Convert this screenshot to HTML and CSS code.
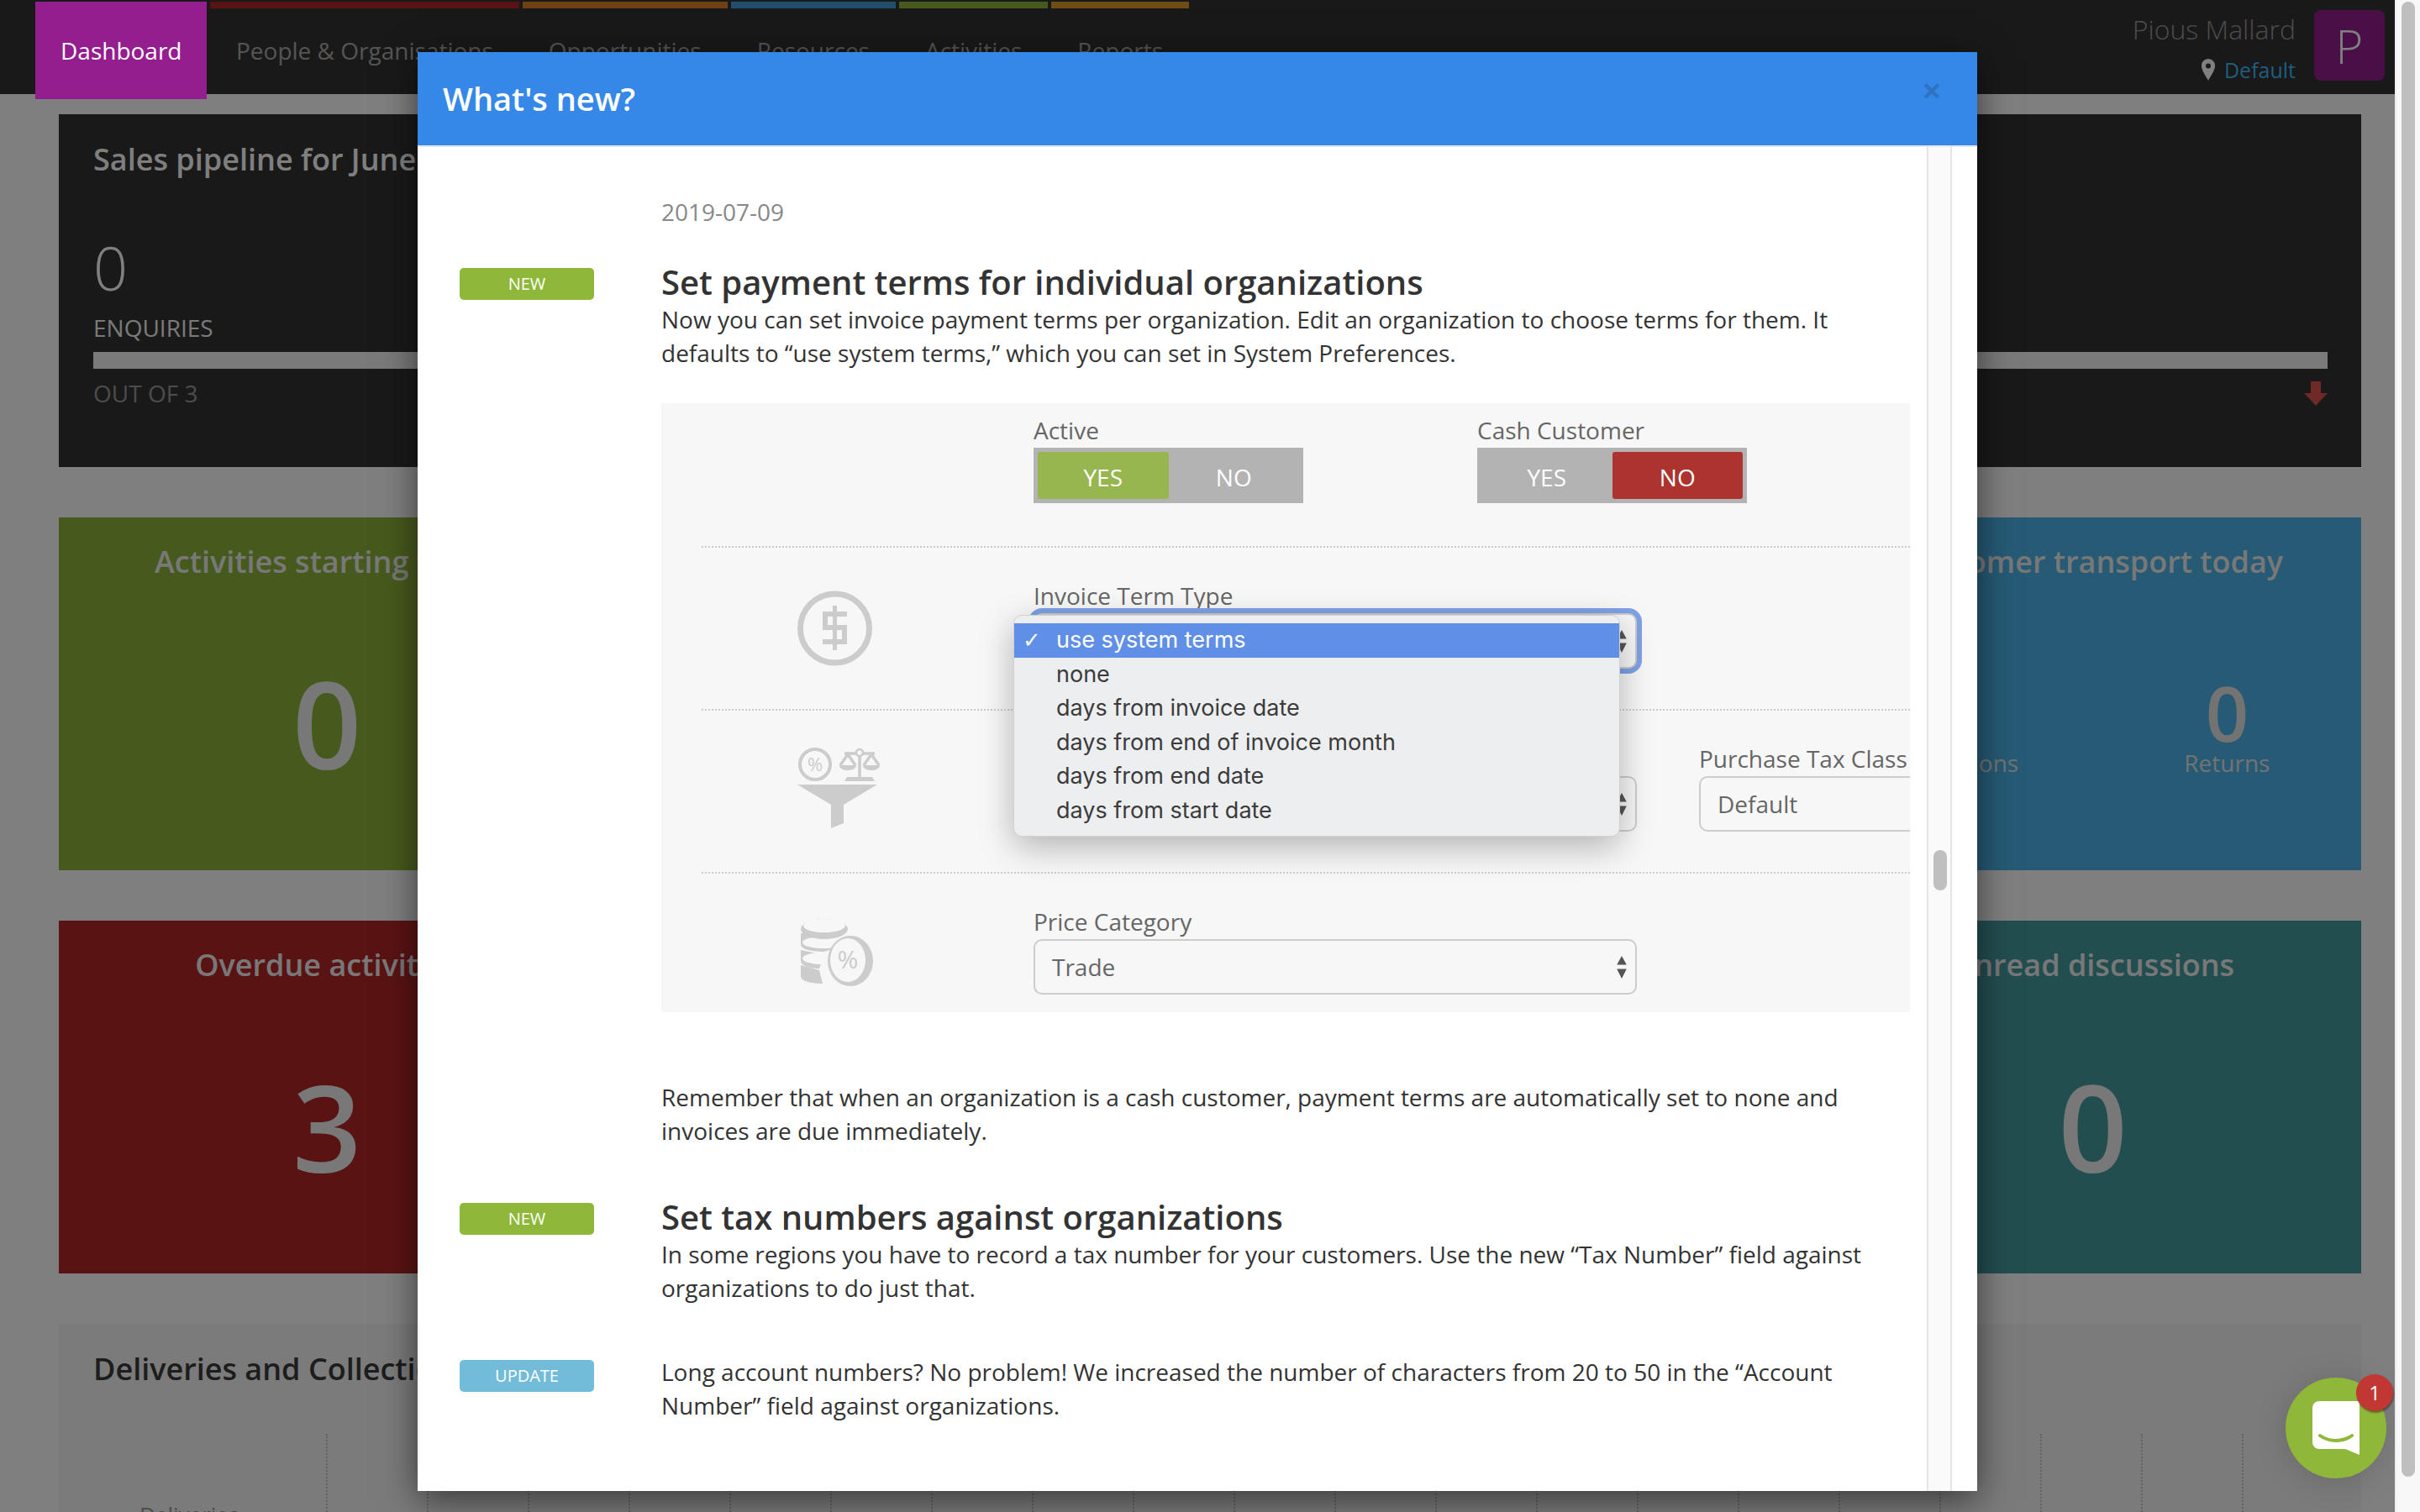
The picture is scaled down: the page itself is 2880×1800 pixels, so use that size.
FILE: index.html
```html
<!DOCTYPE html>
<html lang="en">
<head>
<meta charset="utf-8">
<title>Dashboard - What's new?</title>
<link rel="stylesheet" href="styles.css">
</head>
<body>
<div class="viewport">
  <header class="topbar">
    <nav class="nav">
      <a class="nav-item nav-active">Dashboard</a>
      <a class="nav-item bar-red">People &amp; Organisations</a>
      <a class="nav-item bar-orange">Opportunities</a>
      <a class="nav-item bar-blue">Resources</a>
      <a class="nav-item bar-green">Activities</a>
      <a class="nav-item bar-amber">Reports</a>
    </nav>
    <div class="user">
      <div class="user-text">
        <div class="user-name">Pious Mallard</div>
        <div class="user-store">
          <svg class="pin" viewBox="0 0 16 26"><path fill-rule="evenodd" d="M8 0a8 8 0 0 1 8 8.500C16 14 10.500 21 8 26 5.500 21 0 14 0 8.500A8 8 0 0 1 8 0zm0 5.500a3 3 0 1 0 0 6 3 3 0 0 0 0-6z"/></svg>
          <span class="store-link">Default</span>
        </div>
      </div>
      <div class="avatar">P</div>
    </div>
  </header>

  <main class="dash">
    <section class="card card-dark card-wide">
      <h2 class="sales-title">Sales pipeline for June 2019</h2>
      <div class="sales-num">0</div>
      <div class="sales-label">ENQUIRIES</div>
      <div class="sales-bar"></div>
      <div class="sales-foot">
        <span>OUT OF 3</span>
        <svg class="down" viewBox="0 0 28 29"><path d="M8 0h12v14h8L14 29 0 14h8z"/></svg>
      </div>
    </section>

    <section class="card card-green">
      <h2 class="card-title">Activities starting today</h2>
      <div class="big-num">0</div>
    </section>
    <section class="card card-amber"></section>
    <section class="card card-violet"></section>
    <section class="card card-blue">
      <h2 class="card-title">Customer transport today</h2>
      <div class="split">
        <div><div class="mid-num">0</div><div class="mid-label">Collections</div></div>
        <div><div class="mid-num">0</div><div class="mid-label">Returns</div></div>
      </div>
    </section>

    <section class="card card-red">
      <h2 class="card-title">Overdue activities</h2>
      <div class="big-num">3</div>
    </section>
    <section class="card card-amber"></section>
    <section class="card card-violet"></section>
    <section class="card card-teal">
      <h2 class="card-title">Unread discussions</h2>
      <div class="big-num">0</div>
    </section>

    <section class="panel">
      <h2 class="panel-title">Deliveries and Collections</h2>
      <div class="chart">
        <div class="chart-col chart-first"><span class="chart-label">Deliveries</span></div>
        <div class="chart-col"></div><div class="chart-col"></div><div class="chart-col"></div><div class="chart-col"></div>
        <div class="chart-col"></div><div class="chart-col"></div><div class="chart-col"></div><div class="chart-col"></div>
        <div class="chart-col"></div><div class="chart-col"></div><div class="chart-col"></div><div class="chart-col"></div>
        <div class="chart-col"></div><div class="chart-col"></div><div class="chart-col"></div><div class="chart-col"></div>
        <div class="chart-col"></div><div class="chart-col"></div><div class="chart-col"></div>
      </div>
    </section>
  </main>

  <div class="backdrop"></div>

  <div class="modal">
    <div class="modal-head">
      <h1 class="modal-title">What's new?</h1>
      <span class="modal-close">×</span>
    </div>
    <div class="modal-body">
      <div class="modal-scroll">
        <div class="entry entry-date">
          <div></div>
          <div class="date">2019-07-09</div>
        </div>

        <article class="entry">
          <div><span class="badge badge-new">NEW</span></div>
          <div>
            <h3 class="entry-title">Set payment terms for individual organizations</h3>
            <p class="entry-text">Now you can set invoice payment terms per organization. Edit an organization to choose terms for them. It defaults to “use system terms,” which you can set in System Preferences.</p>

            <div class="shot">
              <div class="shot-row shot-row-top">
                <div class="shot-icon"></div>
                <div class="fields">
                  <div class="field field-active">
                    <div class="field-label">Active</div>
                    <div class="toggle"><span class="toggle-opt opt-yes">YES</span><span class="toggle-opt">NO</span></div>
                  </div>
                  <div class="field">
                    <div class="field-label">Cash Customer</div>
                    <div class="toggle"><span class="toggle-opt">YES</span><span class="toggle-opt opt-no">NO</span></div>
                  </div>
                </div>
              </div>

              <div class="shot-row">
                <div class="shot-icon icon-dollar">
                  <svg class="glyph" viewBox="0 0 110 100">
                    <circle class="g-stroke" cx="50.500" cy="50" r="41" stroke-width="7"/>
                    <path class="g-stroke" stroke-width="6" d="M65 33H39v16h23v17H36"/>
                    <path class="g-stroke" stroke-width="5" d="M50.500 23v53"/>
                  </svg>
                </div>
                <div class="fields">
                  <div class="field field-select">
                    <div class="field-label">Invoice Term Type</div>
                    <div class="select select-focus">
                      <span>use system terms</span>
                      <svg class="updown" viewBox="0 0 14 28"><path d="M7 0l6 11H1zM7 28l6-12H1z"/></svg>
                    </div>
                  </div>
                </div>
              </div>

              <div class="shot-row">
                <div class="shot-icon icon-funnel">
                  <svg class="glyph" viewBox="0 0 110 100">
                    <circle class="g-stroke" cx="27" cy="21" r="18" stroke-width="4"/>
                    <text class="g-text" x="27" y="28.500" text-anchor="middle">%</text>
                    <path class="g-stroke" stroke-width="3.500" d="M62 8h36M80 8v29M66 9l-9 13M66 9l9 13M94 9l-9 13M94 9l9 13"/>
                    <circle class="g-dot" cx="80" cy="7" r="4"/>
                    <path class="g-fill" d="M56 22h20c0 8-20 8-20 0zM84 22h20c0 8-20 8-20 0zM65 36h30l3 5H62z"/>
                    <path class="g-fill" d="M6 45h95L61 69v22l-15 6V69z"/>
                  </svg>
                </div>
                <div class="fields">
                  <div class="field field-select">
                    <div class="field-label">Sales Tax Class</div>
                    <div class="select">
                      <span>Default</span>
                      <svg class="updown" viewBox="0 0 14 28"><path d="M7 0l6 11H1zM7 28l6-12H1z"/></svg>
                    </div>
                  </div>
                  <div class="field field-select field-tax">
                    <div class="field-label">Purchase Tax Class</div>
                    <div class="select"><span>Default</span></div>
                  </div>
                </div>
              </div>

              <div class="shot-row shot-row-last">
                <div class="shot-icon icon-coins">
                  <svg class="glyph" viewBox="0 0 110 100">
                    <path class="g-fill" d="M10 30v13c0 6 12 9 28 9l12-4V30zM10 50v13c0 6 12 9 22 9l6-16zM10 68v13c0 6 12 9 26 9l-4-16z"/>
                    <ellipse class="g-paper" cx="37" cy="41" rx="25" ry="7"/>
                    <ellipse class="g-paper" cx="35" cy="60" rx="23" ry="7"/>
                    <ellipse class="g-fill" cx="38" cy="25" rx="28" ry="12"/>
                    <ellipse class="g-paper" cx="38" cy="21" rx="25" ry="8"/>
                    <ellipse class="g-fill" cx="69" cy="63" rx="27" ry="30"/>
                    <ellipse class="g-paper" cx="66" cy="62" rx="21" ry="26"/>
                    <text class="g-text g-text-big" x="66" y="72" text-anchor="middle">%</text>
                  </svg>
                </div>
                <div class="fields">
                  <div class="field field-select">
                    <div class="field-label">Price Category</div>
                    <div class="select">
                      <span>Trade</span>
                      <svg class="updown" viewBox="0 0 14 28"><path d="M7 0l6 11H1zM7 28l6-12H1z"/></svg>
                    </div>
                  </div>
                </div>
              </div>

              <div class="menu">
                <div class="menu-item menu-selected"><span class="menu-check">✓</span>use system terms</div>
                <div class="menu-item">none</div>
                <div class="menu-item">days from invoice date</div>
                <div class="menu-item">days from end of invoice month</div>
                <div class="menu-item">days from end date</div>
                <div class="menu-item">days from start date</div>
              </div>
            </div>

            <p class="entry-text entry-after">Remember that when an organization is a cash customer, payment terms are automatically set to none and invoices are due immediately.</p>
          </div>
        </article>

        <article class="entry entry-next">
          <div><span class="badge badge-new">NEW</span></div>
          <div>
            <h3 class="entry-title">Set tax numbers against organizations</h3>
            <p class="entry-text">In some regions you have to record a tax number for your customers. Use the new “Tax Number” field against organizations to do just that.</p>
          </div>
        </article>

        <article class="entry entry-next">
          <div><span class="badge badge-update">UPDATE</span></div>
          <div>
            <p class="entry-text">Long account numbers? No problem! We increased the number of characters from 20 to 50 in the “Account Number” field against organizations.</p>
          </div>
        </article>
      </div>
      <div class="modal-track"><div class="modal-thumb"></div></div>
    </div>
  </div>

  <div class="chat">
    <svg class="chat-icon" viewBox="0 0 56 64">
      <path class="chat-bubble" d="M8 0h48v64L39 57H8a8 8 0 0 1-8-8V8a8 8 0 0 1 8-8z"/>
      <path class="chat-smile" d="M9 41c11 8 27 8 38 0"/>
    </svg>
    <span class="chat-badge">1</span>
  </div>
</div>
<div class="page-scroll"><div class="page-thumb"></div></div>
</body>
</html>
```

FILE: styles.css
```css
* { box-sizing: border-box; }
html, body { margin: 0; padding: 0; height: 100%; }
body {
  display: flex;
  width: 2880px;
  height: 1800px;
  overflow: hidden;
  background: #fff;
  font-family: "Open Sans", "Liberation Sans", sans-serif;
  color: #333;
}
h1, h2, h3, p { margin: 0; }

.viewport { position: relative; width: 2850px; height: 1800px; overflow: hidden; flex: none; background: #fff; }
.page-scroll { flex: 1; background: #f8f8f8; border-left: 2px solid #eee; padding: 2px 6px 0; }
.page-thumb { width: 16px; margin-left: 0; height: 1756px; border-radius: 8px; background: #bfbfbf; }

/* top bar */
.topbar { display: flex; justify-content: space-between; height: 112px; background: #333; padding: 2px 12px 0 42px; }
.nav { display: flex; align-items: flex-start; gap: 4px; }
.nav-item { height: 60px; padding: 0 31px; border-top: 8px solid transparent; font-size: 28px; line-height: 100px; color: #aaa; white-space: nowrap; }
.nav-active { height: 116px; width: 204px; padding: 0 30px; border-top: 0; background: #951e8e; color: #fff; line-height: 116px; position: relative; z-index: 1; }
.bar-red { border-top-color: #b42626; }
.bar-orange { border-top-color: #dd8025; }
.bar-blue { border-top-color: #3f9fd8; }
.bar-green { border-top-color: #8eb43a; }
.bar-amber { border-top-color: #dd9a25; }
.user { display: flex; gap: 22px; padding-top: 10px; }
.user-text { display: flex; flex-direction: column; align-items: flex-end; }
.user-name { font-size: 32px; line-height: 46px; color: #999; font-weight: 300; }
.user-store { display: flex; align-items: center; gap: 11px; margin-top: 8px; }
.pin { width: 16px; height: 26px; fill: #fff; }
.store-link { font-size: 25px; line-height: 34px; color: #3fb8f5; }
.avatar { width: 84px; height: 84px; border-radius: 8px; background: #951e8e; color: #fff; font-size: 56px; font-weight: 300; line-height: 84px; text-align: center; }

/* dashboard */
.dash { display: grid; grid-template-columns: repeat(4, 1fr); column-gap: 62px; row-gap: 60px; padding: 24px 40px 0 70px; }
.card { height: 420px; overflow: hidden; text-align: center; color: #fff; }
.card-wide { grid-column: 1 / -1; text-align: left; padding: 30px 40px 0 41px; }
.card-dark { background: #333; }
.card-green { background: #8eb43a; }
.card-blue { background: #4cb4ea; }
.card-red { background: #b42626; }
.card-teal { background: #469ca0; }
.card-amber { background: #e0a030; }
.card-violet { background: #7a4ca0; }
.sales-title, .card-title, .panel-title { font-size: 36px; line-height: 48px; font-weight: 600; }
.card-title { margin-top: 29px; color: #f0f0f0; white-space: nowrap; }
.sales-num { margin-top: 64px; font-size: 72px; line-height: 80px; font-weight: 300; }
.sales-label { margin-top: 14px; font-size: 28px; line-height: 36px; color: #f4f4f4; }
.sales-bar { margin-top: 11px; height: 20px; background: #f4f4f4; }
.sales-foot { display: flex; justify-content: space-between; align-items: center; margin-top: 11px; font-size: 28px; line-height: 36px; color: #999; }
.down { width: 28px; height: 29px; fill: #de554a; }
.big-num { margin-top: 67px; font-size: 144px; line-height: 200px; font-weight: 600; color: #f0f0f0; }
.split { display: grid; grid-template-columns: 1fr 1fr; }
.mid-num { margin-top: 115px; font-size: 90px; line-height: 80px; font-weight: 600; color: #e6e6e6; }
.mid-label { font-size: 28px; line-height: 40px; color: #e6e6e6; }
.panel { grid-column: 1 / -1; height: 400px; background: #f6f6f6; padding-top: 30px; overflow: hidden; }
.panel-title { padding-left: 41px; color: #3a3a3a; }
.chart { display: flex; margin-top: 53px; height: 300px; }
.chart-col { width: 120px; flex: none; border-right: 2px dotted #c4c4c4; }
.chart-first { width: 320px; padding: 78px 0 0 96px; }
.chart-label { font-size: 26px; color: #999; }

.backdrop { position: absolute; inset: 0; background: rgba(0, 0, 0, 0.5); }

/* modal */
.modal { position: absolute; left: 497px; top: 62px; width: 1856px; height: 1713px; background: #fff; box-shadow: 0 10px 40px rgba(0, 0, 0, 0.55); display: flex; flex-direction: column; }
.modal-head { display: flex; justify-content: space-between; align-items: center; height: 113px; flex: none; padding: 0 30px 2px 30px; background: #3688e8; border-bottom: 2px solid #e5e5e5; }
.modal-title { font-size: 38px; font-weight: 600; color: #fff; line-height: 60px; }
.modal-close { font-size: 42px; font-weight: 700; color: #2f74c4; line-height: 40px; margin: -20px 12px 0 0; }
.modal-body { flex: 1; display: flex; overflow: hidden; padding-right: 30px; min-height: 0; }
.modal-scroll { width: 1796px; flex: none; padding: 57px 20px 0 50px; overflow: hidden; }
.modal-track { position: relative; width: 30px; flex: none; background: #fafafa; border-left: 2px solid #e5e5e5; border-right: 2px solid #e5e5e5; }
.modal-thumb { position: absolute; left: 6px; top: 837px; width: 16px; height: 48px; border-radius: 8px; background: #bfbfbf; }

.entry { display: grid; grid-template-columns: 160px 1486px; column-gap: 80px; }
.entry-date { margin-bottom: 40px; }
.date { font-size: 28px; line-height: 40px; color: #888; }
.entry-next { margin-top: 59px; }
.entry-next:last-child { margin-top: 60px; }
.badge { display: block; height: 38px; margin-top: 7px; border-radius: 5px; color: #fff; font-size: 20px; line-height: 38px; text-align: center; }
.badge-new { background: #8fb73a; }
.badge-update { background: #73bcd9; margin-top: 6px; }
.entry-title { font-size: 40px; line-height: 48px; font-weight: 600; color: #333; }
.entry-text { font-size: 28px; line-height: 40px; color: #333; }
.entry-after { margin-top: 81px; }

/* embedded screenshot */
.shot { position: relative; margin-top: 40px; height: 725px; padding-left: 48px; background: #f7f7f7; overflow: hidden; }
.shot-row { display: grid; grid-template-columns: 395px 1fr; height: 194px; border-bottom: 2px dotted #ccc; padding-top: 39px; }
.shot-row-top { height: 172px; padding-top: 14px; }
.shot-row-last { height: 165px; border-bottom: 0; }
.shot-icon { position: relative; }
.glyph { position: absolute; left: 108px; width: 110px; height: 100px; overflow: visible; }
.icon-dollar .glyph { top: 7px; }
.icon-funnel .glyph { top: 4px; }
.icon-coins .glyph { top: 2px; }
.g-stroke { fill: none; stroke: #ccc; }
.g-fill { fill: #ccc; }
.g-paper { fill: #f7f7f7; }
.g-dot { fill: #f7f7f7; stroke: #ccc; stroke-width: 2.500; }
.g-text { fill: #ccc; font-size: 22px; font-family: "Open Sans", sans-serif; }
.g-text-big { font-size: 30px; }
.fields { display: flex; align-items: flex-start; }
.field-active { width: 528px; }
.field-label { font-size: 28px; line-height: 36px; margin-bottom: 3px; color: #666; white-space: nowrap; }
.toggle { display: flex; width: 321px; height: 66px; padding: 5px; background: #b3b3b3; }
.toggle-opt { flex: 1; border-radius: 3px; color: #fff; font-size: 28px; line-height: 60px; text-align: center; }
.opt-yes { background: #97b64f; }
.opt-no { background: #ac332e; }
.field-select { width: 718px; flex: none; }
.field-tax { margin-left: 74px; }
.select { position: relative; display: flex; align-items: center; justify-content: space-between; height: 66px; padding: 0 9px 0 20px; border: 2px solid #ccc; border-radius: 10px; background: #f7f7f7; color: #666; font-size: 28px; }
.select-focus { box-shadow: 0 0 0 6px #7da2e6; }
.updown { width: 14px; height: 27px; fill: #555; }

.menu { position: absolute; left: 419px; top: 252px; width: 722px; height: 264px; padding-top: 9px; border-radius: 10px; background: #edeef0; border: 1px solid #d0d0d0; box-shadow: 0 12px 40px rgba(0, 0, 0, 0.28); font-family: Inter, "Open Sans", sans-serif; font-size: 27px; color: #3b3b3b; }
.menu-item { position: relative; height: 40.600px; padding-left: 50px; line-height: 40px; white-space: nowrap; }
.menu-selected { background: #5f8fe6; color: #fff; }
.menu-check { position: absolute; left: 10px; font-size: 26px; font-family: "DejaVu Sans", sans-serif; font-weight: 700; }

/* chat */
.chat { position: absolute; left: 2720px; top: 1640px; width: 120px; height: 120px; border-radius: 50%; background: #8fb73a; box-shadow: 0 4px 40px rgba(0, 0, 0, 0.14); }
.chat-icon { position: absolute; left: 32px; top: 28px; width: 56px; height: 64px; }
.chat-bubble { fill: #fff; }
.chat-smile { fill: none; stroke: #8fb73a; stroke-width: 4; stroke-linecap: round; }
.chat-badge { position: absolute; left: 84px; top: -4px; width: 44px; height: 44px; border-radius: 50%; background: #c13733; color: #fff; font-size: 24px; line-height: 44px; text-align: center; box-shadow: 1px 2px 2px rgba(0, 0, 0, 0.4); }
```
